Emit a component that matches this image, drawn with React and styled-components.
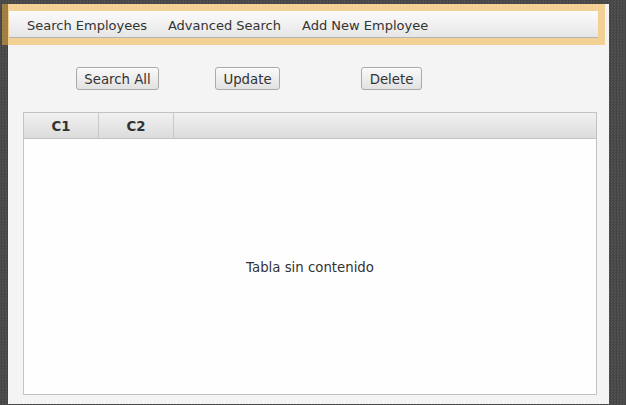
import React from 'react';
import styled, { createGlobalStyle } from 'styled-components';

const GlobalStyle = createGlobalStyle`
  html, body {
    margin: 0;
    padding: 0;
  }
  body {
    width: 626px;
    height: 405px;
    overflow: hidden;
    background-color: #4a4a4a;
    background-image: repeating-conic-gradient(#444 0 25%, #525252 0 50%);
    background-size: 3px 3px;
    font-family: "DejaVu Sans", Verdana, sans-serif;
  }
`;

const Window = styled.div`
  position: relative;
  margin: 4px 0 0 8px;
  width: 601px;
  height: 400px;
  background: #f4f4f4;
  display: flex;
  flex-direction: column;
`;

const Highlight = styled.div`
  position: absolute;
  left: -6px;
  top: 0;
  width: 603px;
  height: 41px;
  box-sizing: border-box;
  border: 7px solid rgba(242, 176, 60, 0.52);
  pointer-events: none;
`;

const MenuBar = styled.div`
  margin: 7px 11px 0 1px;
  height: 27px;
  box-sizing: border-box;
  display: flex;
  align-items: center;
  padding: 2px 0 0 7.5px;
  background: linear-gradient(#fbfbfb, #e6e6e6);
  border-bottom: 1px solid #b3b3b3;
`;

const MenuItem = styled.span`
  padding: 0 10.5px;
  font-size: 13px;
  color: #333;
  white-space: nowrap;
`;

const ButtonRow = styled.div`
  display: flex;
  margin-top: 29px;
  padding-left: 68px;
  height: 23px;
`;

const Button = styled.button`
  margin-left: ${(p) => p.$offset || 0}px;
  height: 23px;
  width: ${(p) => p.$width}px;
  padding: 2px 0 0;
  box-sizing: border-box;
  font-family: "DejaVu Sans", Verdana, sans-serif;
  font-size: 13.3px;
  color: #333;
  background: linear-gradient(#f9f9f9, #e2e2e2);
  border: 1px solid #a9a9a9;
  border-radius: 3px;
  box-shadow: inset 0 1px 0 #fff;
`;

const Table = styled.div`
  margin: 22px 12px 0 15px;
  height: 283px;
  box-sizing: border-box;
  border: 1px solid #c3c3c3;
  background: #fefefe;
  display: flex;
  flex-direction: column;
`;

const Header = styled.div`
  display: flex;
  height: 26px;
  box-sizing: border-box;
  background: linear-gradient(#f1f1f1, #dcdcdc);
  border-bottom: 1px solid #c3c3c3;
`;

const HeaderCell = styled.div`
  width: 75px;
  box-sizing: border-box;
  padding-top: 1px;
  border-right: 1px solid #c8c8c8;
  display: flex;
  align-items: center;
  justify-content: center;
  font-size: 13.3px;
  font-weight: bold;
  color: #333;
`;

const Empty = styled.div`
  flex: 1;
  display: flex;
  align-items: center;
  justify-content: center;
  padding-top: 2px;
  font-size: 13.3px;
  color: #333;
`;

export default function App() {
  return (
    <>
      <GlobalStyle />
      <Window>
        <MenuBar>
          <MenuItem>Search Employees</MenuItem>
          <MenuItem>Advanced Search</MenuItem>
          <MenuItem>Add New Employee</MenuItem>
        </MenuBar>
        <Highlight />
        <ButtonRow>
          <Button $width={83}>Search All</Button>
          <Button $width={65} $offset={56}>Update</Button>
          <Button $width={61} $offset={81}>Delete</Button>
        </ButtonRow>
        <Table>
          <Header>
            <HeaderCell>C1</HeaderCell>
            <HeaderCell>C2</HeaderCell>
          </Header>
          <Empty>Tabla sin contenido</Empty>
        </Table>
      </Window>
    </>
  );
}
